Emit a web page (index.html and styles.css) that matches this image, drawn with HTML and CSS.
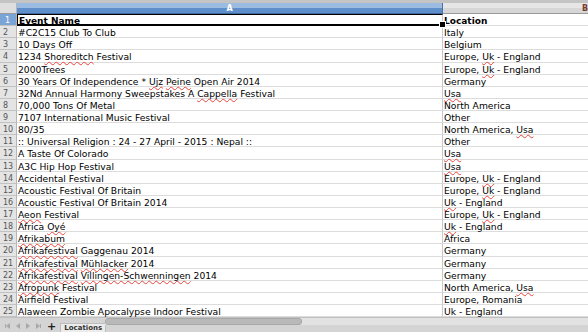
FILE: index.html
```html
<!DOCTYPE html>
<html lang="en">
<head>
  <meta charset="UTF-8" />
  <title>Locations</title>
  <link rel="stylesheet" href="styles.css">
</head>
<body>

<div class="sheet">
  <div class="sheet__edge"></div>

  <div class="grid">
    <div class="corner"></div>
    <div class="col-head col-head--active">A</div>
    <div class="col-head">B</div>

    <div class="row-head row-head--active">1</div>
    <div class="cell cell--bold cell--cursor">Event Name</div>
    <div class="cell cell--bold">Location</div>

    <div class="row-head">2</div>
    <div class="cell">#C2C15 Club To Club</div>
    <div class="cell">Italy</div>

    <div class="row-head">3</div>
    <div class="cell">10 Days Off</div>
    <div class="cell">Belgium</div>

    <div class="row-head">4</div>
    <div class="cell">1234 <span class="sp">Shoreditch</span> Festival</div>
    <div class="cell">Europe, <span class="sp">Uk</span> - England</div>

    <div class="row-head">5</div>
    <div class="cell">2000Trees</div>
    <div class="cell">Europe, <span class="sp">Uk</span> - England</div>

    <div class="row-head">6</div>
    <div class="cell">30 Years Of Independence * <span class="sp">Ujz</span> <span class="sp">Peine</span> Open Air 2014</div>
    <div class="cell">Germany</div>

    <div class="row-head">7</div>
    <div class="cell">32Nd Annual Harmony Sweepstakes A <span class="sp">Cappella</span> Festival</div>
    <div class="cell"><span class="sp">Usa</span></div>

    <div class="row-head">8</div>
    <div class="cell">70,000 Tons Of Metal</div>
    <div class="cell">North America</div>

    <div class="row-head">9</div>
    <div class="cell">7107 International Music Festival</div>
    <div class="cell">Other</div>

    <div class="row-head">10</div>
    <div class="cell">80/35</div>
    <div class="cell">North America, <span class="sp">Usa</span></div>

    <div class="row-head">11</div>
    <div class="cell">:: Universal Religion : 24 - 27 April - 2015 : Nepal ::</div>
    <div class="cell">Other</div>

    <div class="row-head">12</div>
    <div class="cell">A Taste Of Colorado</div>
    <div class="cell"><span class="sp">Usa</span></div>

    <div class="row-head">13</div>
    <div class="cell">A3C Hip Hop Festival</div>
    <div class="cell"><span class="sp">Usa</span></div>

    <div class="row-head">14</div>
    <div class="cell">Accidental Festival</div>
    <div class="cell">Europe, <span class="sp">Uk</span> - England</div>

    <div class="row-head">15</div>
    <div class="cell">Acoustic Festival Of Britain</div>
    <div class="cell">Europe, <span class="sp">Uk</span> - England</div>

    <div class="row-head">16</div>
    <div class="cell">Acoustic Festival Of Britain 2014</div>
    <div class="cell"><span class="sp">Uk</span> - England</div>

    <div class="row-head">17</div>
    <div class="cell"><span class="sp">Aeon</span> Festival</div>
    <div class="cell">Europe, <span class="sp">Uk</span> - England</div>

    <div class="row-head">18</div>
    <div class="cell">Africa <span class="sp">Oyé</span></div>
    <div class="cell"><span class="sp">Uk</span> - England</div>

    <div class="row-head">19</div>
    <div class="cell"><span class="sp">Afrikabum</span></div>
    <div class="cell">Africa</div>

    <div class="row-head">20</div>
    <div class="cell"><span class="sp">Afrikafestival</span> Gaggenau 2014</div>
    <div class="cell">Germany</div>

    <div class="row-head">21</div>
    <div class="cell"><span class="sp">Afrikafestival</span> <span class="sp">Mühlacker</span> 2014</div>
    <div class="cell">Germany</div>

    <div class="row-head">22</div>
    <div class="cell"><span class="sp">Afrikafestival</span> <span class="sp">Villingen-Schwenningen</span> 2014</div>
    <div class="cell">Germany</div>

    <div class="row-head">23</div>
    <div class="cell"><span class="sp">Afropunk</span> Festival</div>
    <div class="cell">North America, <span class="sp">Usa</span></div>

    <div class="row-head">24</div>
    <div class="cell">Airfield Festival</div>
    <div class="cell">Europe, Romania</div>

    <div class="row-head">25</div>
    <div class="cell"><span class="sp">Alaween</span> Zombie Apocalypse Indoor Festival</div>
    <div class="cell"><span class="sp">Uk</span> - England</div>
  </div>

  <div class="tabbar">
    <div class="tabbar__nav">
      <span class="nav nav--first"></span>
      <span class="nav nav--prev"></span>
      <span class="nav nav--next"></span>
      <span class="nav nav--last"></span>
    </div>
    <span class="tabbar__add">+</span>
    <div class="tabbar__tab">Locations</div>
    <div class="hscroll">
      <div class="hscroll__thumb"></div>
    </div>
  </div>
</div>

</body>
</html>
```

FILE: styles.css
```css
* {
  box-sizing: border-box;
}
body {
  margin: 0;
  background: #ffffff;
  font-family: 'DejaVu Sans', sans-serif;
  overflow: hidden;
}

.sheet {
  width: 588px;
  height: 332px;
  display: flex;
  flex-direction: column;
  overflow: hidden;
}
.sheet__edge {
  height: 3px;
  background: #c4c4c4;
  flex: none;
}

.grid {
  display: grid;
  grid-template-columns: 17px 426px 1fr;
  grid-template-rows: 11px repeat(25, 12.125px);
  flex: none;
}

.corner {
  background: #dedede;
  border-right: 1px solid #b5b5b5;
  border-bottom: 1px solid #9a9a9a;
}
.col-head {
  background: linear-gradient(#e6e6e6 0 50%, #d6d6d6 50%);
  border-bottom: 1px solid #9a9a9a;
  font-size: 8px;
  font-weight: bold;
  color: #7a3b2e;
  text-align: right;
  line-height: 11px;
  overflow: hidden;
}
.col-head--active {
  background: linear-gradient(#9bbbe0 0 50%, #5f8fcb 50%);
  color: #ffffff;
  text-align: center;
  border-right: 1px solid #4a74a8;
  border-bottom-color: #3f6aa0;
}

.row-head {
  background: #e4e4e4;
  border-right: 1px solid #b5b5b5;
  border-bottom: 1px solid #c2c2c2;
  font-size: 8px;
  color: #555555;
  line-height: 10px;
  padding-top: 2px;
  padding-left: 3px;
}
.row-head--active {
  background: #7ba4d6;
  color: #ffffff;
  padding-left: 5px;
}

.cell {
  border-bottom: 1px solid #dcdcdc;
  font-size: 9.2px;
  line-height: 10px;
  padding-top: 2px;
  color: #000000;
  padding-left: 1px;
  white-space: nowrap;
}
.cell:nth-child(3n+2) {
  border-right: 1px solid #c8c8c8;
}
.cell--bold {
  font-weight: bold;
  font-size: 9px;
}
.cell--cursor {
  position: relative;
  border: 1px solid #000000;
  border-bottom-width: 2px;
  border-right-width: 2px;
  padding-top: 1px;
}
.cell--cursor::after {
  content: "";
  position: absolute;
  right: -4px;
  bottom: -4px;
  width: 5px;
  height: 5px;
  background: #000000;
  border: 1px solid #ffffff;
}

.sp {
  text-decoration-line: underline;
  text-decoration-style: wavy;
  text-decoration-color: #e8443c;
  text-decoration-thickness: 0.7px;
  text-underline-offset: 0.5px;
  text-decoration-skip-ink: none;
}

.tabbar {
  flex: 1;
  display: flex;
  align-items: flex-end;
  background: #d4d4d4;
  border-top: 1px solid #c0c0c0;
  position: relative;
}
.tabbar__nav {
  display: flex;
  gap: 6px;
  align-items: center;
  height: 10px;
  padding-left: 6px;
  margin-bottom: 1px;
}
.nav {
  width: 0;
  height: 0;
  border-top: 3px solid transparent;
  border-bottom: 3px solid transparent;
}
.nav--first,
.nav--prev {
  border-right: 4px solid #a8a8a8;
}
.nav--next,
.nav--last {
  border-left: 4px solid #a8a8a8;
}
.nav--first {
  box-shadow: -2px 0 0 -1px #a8a8a8;
}
.nav--last {
  box-shadow: 2px 0 0 -1px #a8a8a8;
}
.tabbar__add {
  font-size: 11px;
  font-weight: bold;
  color: #202020;
  margin-left: 7px;
  line-height: 11px;
}
.tabbar__tab {
  margin-left: 4px;
  width: 46px;
  height: 9px;
  background: #ececec;
  border: 1px solid #bdbdbd;
  border-bottom: none;
  font-size: 7px;
  font-weight: bold;
  color: #333333;
  text-align: center;
  line-height: 9px;
}
.hscroll {
  position: absolute;
  left: 105px;
  right: 0;
  top: 0;
  height: 7px;
  background: #e2e2e2;
}
.hscroll__thumb {
  width: 197px;
  height: 7px;
  background: #b9b9b9;
  border: 1px solid #a8a8a8;
  border-radius: 3px;
}
```
